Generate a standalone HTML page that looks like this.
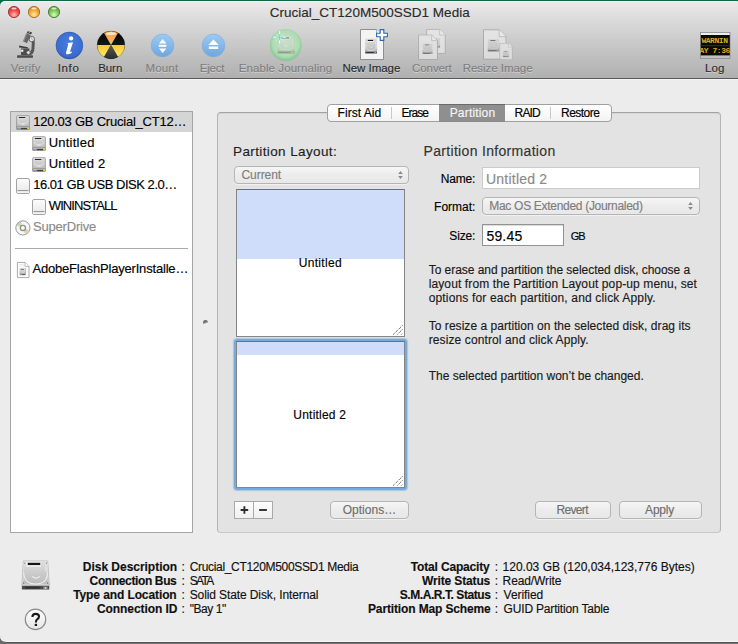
<!DOCTYPE html>
<html><head><meta charset="utf-8">
<style>
*{margin:0;padding:0;box-sizing:border-box}
html,body{width:738px;height:644px;overflow:hidden}
body{position:relative;background:#ececec;font-family:"Liberation Sans",sans-serif;color:#000}
.a{position:absolute}
.t{position:absolute;white-space:pre;line-height:1;-webkit-text-stroke:0.15px currentColor}
.s12{font-size:12px}
.s13{font-size:13px;letter-spacing:0.3px}
.s14{font-size:14px}
.lbl{position:absolute;top:62px;width:120px;font-size:12px;line-height:12px;white-space:pre;color:#2a2a2a;text-align:center}
.dis{color:#8c8c8c}
.btn{position:absolute;height:18px;background:linear-gradient(#f6f6f6,#ececec 50%,#e8e8e8);border:1px solid #b5b5b5;border-radius:4px;box-shadow:0 1px 0 rgba(255,255,255,.5)}
.bl{position:absolute;font-size:12px;font-weight:bold;line-height:14px;text-align:right;white-space:pre;color:#111}
.bv{position:absolute;font-size:12px;line-height:14px;white-space:pre;color:#111}
</style></head><body>
<svg width="0" height="0" style="position:absolute">
<defs>
 <linearGradient id="hdTop" x1="0" y1="0" x2="0" y2="1"><stop offset="0" stop-color="#dedede"/><stop offset="1" stop-color="#bababa"/></linearGradient>
 <linearGradient id="blueBtn" x1="0" y1="0" x2="0" y2="1"><stop offset="0" stop-color="#9dcaf2"/><stop offset="1" stop-color="#6ea6dd"/></linearGradient>
 <radialGradient id="infoG" cx="0.5" cy="0.4" r="0.6"><stop offset="0" stop-color="#4a7ddc"/><stop offset="0.85" stop-color="#3a6bd0"/><stop offset="1" stop-color="#2c58b8"/></radialGradient>
 <radialGradient id="jG" cx="0.5" cy="0.45" r="0.55"><stop offset="0" stop-color="#cde6cf"/><stop offset="0.75" stop-color="#aedbb3"/><stop offset="1" stop-color="#80c48c"/></radialGradient>
 <linearGradient id="burnY" x1="0" y1="0" x2="0" y2="1"><stop offset="0" stop-color="#f6c83c"/><stop offset="1" stop-color="#fde767"/></linearGradient>
 <linearGradient id="burnO" x1="0" y1="0" x2="0" y2="1"><stop offset="0" stop-color="#f59a3a"/><stop offset="1" stop-color="#f9c070"/></linearGradient>
 <symbol id="hd" viewBox="0 0 30 30">
  <path d="M3.3 0.9 H26.8 L28.3 24.2 H1.8Z" fill="url(#hdTop)" stroke="#9a9a9a" stroke-width="0.5"/>
  <path d="M3.9 1.6 H26.2 L27.5 23.6 H2.6Z" fill="none" stroke="#ececec" stroke-width="0.6"/>
  <rect x="5.9" y="1.8" width="14.5" height="4.8" fill="#f0f0f0"/>
  <rect x="7.5" y="2.7" width="12.1" height="2.2" fill="#151515"/>
  <path d="M3.6 12 Q4 23 15.2 23.2 Q26.4 23 26.6 12" stroke="#eeeeee" stroke-width="1" fill="none"/>
  <path d="M11.8 15.8 Q15.4 19.4 19 15.8" stroke="#eeeeee" stroke-width="1.1" fill="none"/>
  <rect x="24.6" y="2.5" width="1.2" height="9" fill="#e6e6e6"/>
  <circle cx="4.6" cy="3" r="0.6" fill="#777"/><circle cx="25.6" cy="3" r="0.6" fill="#777"/>
  <circle cx="3.5" cy="22.3" r="0.6" fill="#555"/><circle cx="26.8" cy="22.3" r="0.6" fill="#555"/>
  <rect x="1.8" y="24.2" width="26.5" height="4.4" rx="0.6" fill="#4c4c4c"/>
  <rect x="1.8" y="24.2" width="26.5" height="0.7" fill="#dadada"/>
  <rect x="5" y="26" width="14" height="1.6" fill="#2e2e2e"/>
  <rect x="22.3" y="25.5" width="4.6" height="2.6" fill="#6f7aa8"/>
  <circle cx="24.7" cy="27.1" r="0.95" fill="#f6f200"/>
 </symbol>
 <symbol id="hds" viewBox="0 0 14 15">
  <rect x="0.6" y="0.6" width="12.8" height="11.6" rx="1" fill="url(#hdTop)" stroke="#808080" stroke-width="0.6"/>
  <rect x="2.3" y="1.4" width="7.6" height="2.3" fill="#f6f6f6"/>
  <rect x="2.8" y="1.9" width="6.6" height="1.2" fill="#2a2a2a"/>
  <path d="M1.8 6.5 Q7 12.5 12.2 6.5" stroke="#f0f0f0" stroke-width="0.7" fill="none"/>
  <path d="M5.3 8 Q7 9.2 8.7 8" stroke="#f0f0f0" stroke-width="0.7" fill="none"/>
  <rect x="0.6" y="11.6" width="12.8" height="3" rx="0.6" fill="#9a9a9a" stroke="#6a6a6a" stroke-width="0.5"/>
  <rect x="1" y="11.8" width="12" height="0.6" fill="#ececec"/>
  <rect x="5.4" y="12.9" width="1.3" height="1.3" fill="#111"/>
  <rect x="7.4" y="12.9" width="1.3" height="1.3" fill="#111"/>
  <rect x="9.4" y="12.9" width="1.3" height="1.3" fill="#111"/>
  <rect x="11.5" y="12.7" width="1.4" height="1.4" fill="#f2ec00"/>
 </symbol>
 <symbol id="doc" viewBox="0 0 24 31">
  <path d="M0.5 0.5 H16.5 L23.5 7.5 V30.5 H0.5Z" fill="#f4f4f4" stroke="#8e8e8e" stroke-width="1"/>
  <path d="M16.5 0.5 V7.5 H23.5" fill="#fff" stroke="#9a9a9a" stroke-width="0.8"/>
 </symbol>
</defs>
</svg>

<!-- window chrome -->
<div class="a" style="left:0;top:0;width:738px;height:8px;background:#0b6a44"></div>
<div class="a" style="left:0;top:1px;width:738px;height:78px;background:linear-gradient(#eaeaea 0,#d9d9d9 20px,#afafaf 77px);border-radius:5px 1px 0 0;border-top:1px solid #fafafa"></div>
<div class="a" style="left:0;top:78px;width:738px;height:1px;background:#585858"></div>
<div class="a" style="left:0;top:79px;width:738px;height:1px;background:#f6f6f6"></div>

<!-- traffic lights -->
<svg class="a" style="left:6px;top:4px" width="56" height="16" viewBox="0 0 56 16">
 <defs>
  <radialGradient id="rR" cx="0.5" cy="0.75" r="0.6"><stop offset="0" stop-color="#ffc2bd"/><stop offset="0.6" stop-color="#f65452"/><stop offset="1" stop-color="#dc3a38"/></radialGradient>
  <radialGradient id="rO" cx="0.5" cy="0.75" r="0.6"><stop offset="0" stop-color="#ffeaa8"/><stop offset="0.6" stop-color="#f7b13c"/><stop offset="1" stop-color="#e0922a"/></radialGradient>
  <radialGradient id="rG" cx="0.5" cy="0.75" r="0.6"><stop offset="0" stop-color="#dcf7c0"/><stop offset="0.6" stop-color="#86cd60"/><stop offset="1" stop-color="#62ad46"/></radialGradient>
 </defs>
 <circle cx="8" cy="8" r="5.6" fill="url(#rR)" stroke="#9c2f2f" stroke-width="0.9"/>
 <ellipse cx="8" cy="4.6" rx="2.6" ry="1" fill="#fff" opacity=".75"/>
 <circle cx="28" cy="8" r="5.6" fill="url(#rO)" stroke="#9f6a1f" stroke-width="0.9"/>
 <ellipse cx="28" cy="4.6" rx="2.6" ry="1" fill="#fff" opacity=".75"/>
 <circle cx="48" cy="8" r="5.6" fill="url(#rG)" stroke="#3d7d2c" stroke-width="0.9"/>
 <ellipse cx="48" cy="4.6" rx="2.6" ry="1" fill="#fff" opacity=".75"/>
</svg>

<!-- toolbar icons -->
<!-- microscope -->
<svg class="a" style="left:12px;top:28px" width="30" height="34" viewBox="0 0 30 34">
 <path d="M5 28.2 Q5 27 6.5 27 H19.5 Q21 27 21 28.2 V29.2 Q21 29.8 20 29.8 H6 Q5 29.8 5 29.2Z" fill="#4a4a4a"/>
 <path d="M6 27.5 H20" stroke="#8a8a8a" stroke-width="0.5"/>
 <path d="M16.5 8.5 Q22.8 8.3 22.8 14.5 L22.4 21 Q22 26.5 18 27.2 L15.5 27.2 L16 24.5 Q19.2 24 19.5 20.5 L19.8 14.8 Q19.8 11.8 17.2 11.6Z" fill="#555"/>
 <path d="M14.3 5.3 L18.6 6.9 L15 15.3 L11.1 13.3Z" fill="#666"/>
 <path d="M14.3 5.3 L15.3 5.7 L12 13.7 L11.1 13.3Z" fill="#8e8e8e"/>
 <path d="M15.6 3.2 L19.9 4.3 L19.2 6.4 L14.9 5Z" fill="#3e3e3e"/>
 <circle cx="17.3" cy="4.6" r="0.6" fill="#bbb"/>
 <circle cx="19.8" cy="11.1" r="2.7" fill="#e6e6e6" stroke="#4a4a4a" stroke-width="0.8"/>
 <path d="M19.6 9.5 V11.1 L21 12.1" stroke="#777" stroke-width="0.5" fill="none"/>
 <path d="M7.1 17.4 L15.8 19.3 L15.8 20.5 L7.1 19.5Z" fill="#3e3e3e"/>
 <path d="M9 20.4 H17.4 V27 H9Z" fill="#4d4d4d"/>
 <circle cx="10.2" cy="22.7" r="1.3" fill="#e8e8e8"/>
 <circle cx="16.4" cy="24.6" r="1.8" fill="#e8e8e8" stroke="#555" stroke-width="0.6"/>
</svg>
<!-- info -->
<svg class="a" style="left:55px;top:31px" width="29" height="29" viewBox="0 0 29 29">
 <circle cx="14.4" cy="14.5" r="13.4" fill="url(#infoG)" stroke="#2a52a8" stroke-width="0.6"/>
 <circle cx="16.1" cy="7.4" r="2.1" fill="#fff"/>
 <path d="M12.9 11.9 L18 11.2 L15.1 20.2 Q14.9 21.3 16.9 20.5 L16.5 22.1 Q13.6 23.8 11.6 23.2 Q10.7 22.8 11.1 21.2 L13.2 13.6 Q13.1 12.9 12.6 12.9Z" fill="#fff"/>
</svg>
<!-- burn -->
<svg class="a" style="left:96px;top:30px" width="30" height="30" viewBox="0 0 30 30">
 <defs>
  <linearGradient id="bk" x1="0" y1="0" x2="0" y2="1"><stop offset="0" stop-color="#050505"/><stop offset="0.6" stop-color="#1a1a1a"/><stop offset="1" stop-color="#3c3c3c"/></linearGradient>
  <linearGradient id="bg2" x1="0" y1="0" x2="0" y2="1"><stop offset="0" stop-color="#5a5a5a"/><stop offset="1" stop-color="#2c2c2c"/></linearGradient>
 </defs>
 <circle cx="15" cy="15" r="13.9" fill="url(#bk)"/>
 <path d="M15 15 L21.95 2.96 A13.9 13.9 0 0 0 8.05 2.96Z" fill="url(#burnO)"/>
 <path d="M15 15 L28.9 15 A13.9 13.9 0 0 1 21.95 27.04Z" fill="url(#burnY)"/>
 <path d="M15 15 L1.1 15 A13.9 13.9 0 0 0 8.05 27.04Z" fill="url(#burnY)"/>
 <path d="M15 15 L21.95 27.04 A13.9 13.9 0 0 1 8.05 27.04Z" fill="url(#bg2)"/>
 <ellipse cx="15" cy="3.6" rx="5.2" ry="1.6" fill="#fff" opacity=".7"/>
 <circle cx="15" cy="15" r="13.9" fill="none" stroke="#000" stroke-opacity=".25" stroke-width="0.6"/>
</svg>
<!-- mount -->
<svg class="a" style="left:150px;top:33px" width="25" height="25" viewBox="0 0 25 25">
 <circle cx="12.5" cy="12.5" r="11.4" fill="url(#blueBtn)" stroke="#7aaee0" stroke-width="0.6"/>
 <path d="M12.7 6 L16.4 10.6 H9Z" fill="#fff"/>
 <rect x="8.8" y="11.8" width="7.6" height="2" fill="#fff"/>
 <path d="M9 15.6 H16.4 L12.7 20Z" fill="#fff"/>
</svg>
<!-- eject -->
<svg class="a" style="left:201px;top:33px" width="25" height="25" viewBox="0 0 25 25">
 <circle cx="12.5" cy="12.5" r="11.4" fill="url(#blueBtn)" stroke="#7aaee0" stroke-width="0.6"/>
 <path d="M12.4 6.6 L17.8 12.1 H7.4Z" fill="#fff"/>
 <rect x="7.8" y="13.5" width="9.4" height="2.5" fill="#fff"/>
</svg>
<!-- enable journaling -->
<svg class="a" style="left:269px;top:28px" width="34" height="34" viewBox="0 0 34 34">
 <circle cx="16.8" cy="17" r="16" fill="url(#jG)"/>
 <g opacity=".35"><use href="#hd" x="7.6" y="7.4" width="19" height="19.2"/></g>
 <path d="M6.5 5.2 L14.7 13.4 M14.7 5.2 L6.5 13.4" stroke="#e6f6f6" stroke-width="0.7" opacity=".7"/>
 <path d="M10.6 3 V15.5 M4.2 9.3 H17" stroke="#e4fbfb" stroke-width="1.1"/>
 <path d="M10.6 6.3 V12.3 M7.6 9.3 H13.6" stroke="#5cd6d6" stroke-width="0.9"/>
</svg>
<!-- new image -->
<svg class="a" style="left:360px;top:29px" width="30" height="32" viewBox="0 0 30 32">
 <use href="#doc" x="0" y="0" width="24" height="31"/>
 <svg x="4.4" y="9.4" width="13.4" height="15.8" viewBox="0 0 30 30" preserveAspectRatio="none"><use href="#hd" width="30" height="30"/></svg>
 <path d="M20.2 0.6 H23.8 V4.2 H27.4 V7.8 H23.8 V11.4 H20.2 V7.8 H16.6 V4.2 H20.2Z" fill="#fff" stroke="#2e67b1" stroke-width="1.1"/>
</svg>
<!-- convert -->
<svg class="a" style="left:417px;top:29px" width="30" height="32" viewBox="0 0 30 32" opacity=".55">
 <use href="#doc" x="9" y="0" width="20" height="25"/>
 <use href="#hd" x="13.5" y="9" width="10" height="10"/>
 <use href="#doc" x="0.5" y="5.5" width="21" height="25.5"/>
 <use href="#hd" x="5" y="14.5" width="11" height="11"/>
</svg>
<!-- resize image -->
<svg class="a" style="left:482px;top:29px" width="32" height="32" viewBox="0 0 32 32" opacity=".55">
 <use href="#doc" x="1" y="0" width="23.5" height="31"/>
 <use href="#hd" x="5" y="10" width="13" height="13"/>
 <use href="#doc" x="17" y="14" width="14" height="17"/>
 <use href="#hd" x="20.2" y="21.5" width="7.5" height="7"/>
</svg>
<!-- log -->
<svg class="a" style="left:700px;top:32px" width="31" height="27" viewBox="0 0 31 27">
 <defs><linearGradient id="lgS" x1="0" y1="0" x2="0" y2="1"><stop offset="0" stop-color="#f2f2f2"/><stop offset="1" stop-color="#bdbdbd"/></linearGradient></defs>
 <rect x="0.5" y="0.5" width="29.5" height="26" fill="url(#lgS)" stroke="#8a8a8a" stroke-width="0.8"/>
 <rect x="0.8" y="3" width="29" height="20.4" fill="#0a0a0a"/>
 <rect x="0.8" y="13" width="29" height="1.2" fill="#2a2a2a"/>
 <text x="1.4" y="11.2" font-family="Liberation Mono" font-weight="bold" font-size="8" fill="#dba82c" letter-spacing="-0.45">WARNIN</text>
 <text x="-0.6" y="21" font-family="Liberation Mono" font-weight="bold" font-size="8" fill="#dba82c" letter-spacing="-0.45">AY 7:36</text>
</svg>


<!-- sidebar -->
<div class="a" style="left:10px;top:111px;width:183px;height:422px;background:#fff;border:1px solid #a5a5a5"></div>
<div class="a" style="left:11px;top:112px;width:181px;height:20px;background:#d5d5d5"></div>
<svg class="a" style="left:16px;top:115px" width="14" height="15"><use href="#hds" width="14" height="15"/></svg>
<svg class="a" style="left:32px;top:136px" width="14" height="15"><use href="#hds" width="14" height="15"/></svg>
<svg class="a" style="left:32px;top:157px" width="14" height="15"><use href="#hds" width="14" height="15"/></svg>
<svg class="a" style="left:16px;top:178px" width="14" height="16" viewBox="0 0 14 16">
 <defs><linearGradient id="ug" x1="0" y1="0" x2="0" y2="1"><stop offset="0" stop-color="#fdfdfd"/><stop offset="1" stop-color="#e6e6e6"/></linearGradient></defs>
 <rect x="0.5" y="0.5" width="13" height="15" rx="1.6" fill="url(#ug)" stroke="#a2a2a2"/>
 <rect x="1.6" y="12.1" width="10.8" height="1.1" fill="#8e8e8e"/>
 <rect x="1" y="13.3" width="12" height="1.7" fill="#f2f2f2"/>
</svg>
<svg class="a" style="left:32px;top:199px" width="14" height="16" viewBox="0 0 14 16">
 <defs><linearGradient id="ug" x1="0" y1="0" x2="0" y2="1"><stop offset="0" stop-color="#fdfdfd"/><stop offset="1" stop-color="#e6e6e6"/></linearGradient></defs>
 <rect x="0.5" y="0.5" width="13" height="15" rx="1.6" fill="url(#ug)" stroke="#a2a2a2"/>
 <rect x="1.6" y="12.1" width="10.8" height="1.1" fill="#8e8e8e"/>
 <rect x="1" y="13.3" width="12" height="1.7" fill="#f2f2f2"/>
</svg>
<svg class="a" style="left:15px;top:220px" width="16" height="16" viewBox="0 0 16 16">
 <defs><linearGradient id="rb" x1="0" y1="0" x2="1" y2="1"><stop offset="0" stop-color="#6fb6ff"/><stop offset="0.35" stop-color="#8fe08f"/><stop offset="0.65" stop-color="#ffc08a"/><stop offset="1" stop-color="#f0a0c0"/></linearGradient></defs>
 <circle cx="7.9" cy="7.9" r="7.1" fill="#f6f6f6" stroke="#8c8c8c" stroke-width="0.9"/>
 <path d="M7.9 7.9 L1.6 5.6 A6.7 6.7 0 0 1 5.6 1.6Z" fill="url(#rb)" opacity=".8"/>
 <path d="M7.9 7.9 L14.2 10.2 A6.7 6.7 0 0 1 10.2 14.2Z" fill="url(#rb)" opacity=".8"/>
 <circle cx="7.9" cy="7.9" r="2.6" fill="#fafafa" stroke="#8f8f8f" stroke-width="1.3"/>
 <circle cx="7.9" cy="7.9" r="1.1" fill="#fff"/>
</svg>
<svg class="a" style="left:16px;top:261px" width="14" height="18" viewBox="0 0 14 18">
 <path d="M1.4 1.4 H9 L13 5.4 V16.6 H1.4Z" fill="#fcfcfc" stroke="#a0a0a0" stroke-width="0.9"/>
 <path d="M9 1.4 V5.4 H13" fill="#fff" stroke="#a8a8a8" stroke-width="0.8"/>
 <rect x="3" y="3.4" width="5" height="0.5" fill="#dcdcdc"/><rect x="3" y="4.8" width="5" height="0.5" fill="#dcdcdc"/>
 <use href="#hds" x="3.4" y="7" width="6.8" height="7.4"/>
</svg>
<div class="a" style="left:15px;top:248px;width:173px;height:1px;background:#ababab"></div>

<!-- splitter dot -->
<div class="a" style="left:203px;top:319.5px;width:5px;height:5px;border-radius:50%;background:linear-gradient(160deg,#555 0,#7a7a7a 45%,#f4f4f4 75%,#fff 100%)"></div>

<!-- panel -->
<div class="a" style="left:217px;top:112px;width:504px;height:421px;background:#e3e3e3;border:1px solid #b4b4b4;border-top-color:#a2a2a2;border-bottom-color:#c8c8c8;border-radius:4px;box-shadow:inset 0 1px 1px rgba(0,0,0,.06)"></div>
<div class="a" style="left:327px;top:104px;width:285px;height:18px;background:linear-gradient(#ffffff,#f3f3f3);border:1px solid #a0a0a0;border-radius:4px"></div>
<div class="a" style="left:439px;top:104px;width:66px;height:18px;background:#8f8f8f;border-top:1px solid #6a6a6a;border-bottom:1px solid #8a8a8a"></div>
<div class="a" style="left:391px;top:107px;width:1px;height:12px;background:#c8c8c8"></div>
<div class="a" style="left:550px;top:107px;width:1px;height:12px;background:#c8c8c8"></div>

<div class="btn" style="left:234px;top:166px;width:175px;height:18px"></div>
<svg class="a" style="left:396.5px;top:170px" width="7" height="11" viewBox="0 0 7 11"><path d="M3.5 1 L5.8 4 H1.2Z M1.2 6 H5.8 L3.5 9Z" fill="#8a8a8a"/></svg>

<div class="a" style="left:236px;top:189px;width:169px;height:148px;background:#fff;border:1px solid #858585;border-top-color:#687083"></div>
<div class="a" style="left:237px;top:190px;width:167px;height:69px;background:#cfddfb"></div>
<svg class="a" style="left:392px;top:324px" width="12" height="12" viewBox="0 0 12 12"><path d="M1.1 10.6 L10.6 1.3 M5.3 10.5 L10.6 5.2 M9.3 10.5 L10.6 9.2" stroke="#3a3a3a" stroke-width="0.9" stroke-dasharray="1.1 0.9"/></svg>

<div class="a" style="left:234px;top:339px;width:173px;height:151px;border:2px solid #74abdd;border-radius:3px;box-shadow:0 0 1px 1px rgba(120,175,225,.55)"></div>
<div class="a" style="left:236px;top:341px;width:169px;height:147px;background:#fff;border:1px solid #858585;border-top-color:#687083"></div>
<div class="a" style="left:237px;top:342px;width:167px;height:13px;background:#cfddfb"></div>
<svg class="a" style="left:392px;top:475px" width="12" height="12" viewBox="0 0 12 12"><path d="M1.1 10.6 L10.6 1.3 M5.3 10.5 L10.6 5.2 M9.3 10.5 L10.6 9.2" stroke="#3a3a3a" stroke-width="0.9" stroke-dasharray="1.1 0.9"/></svg>

<div class="a" style="left:234px;top:501px;width:39px;height:18px;background:linear-gradient(#fdfdfd,#f0f0f0);border:1px solid #a9a9a9"></div>
<div class="a" style="left:253px;top:502px;width:1px;height:16px;background:#a9a9a9"></div>
<svg class="a" style="left:234px;top:501px" width="39" height="18" viewBox="0 0 39 18"><path d="M6.6 9 H14.2 M10.4 5.2 V12.8" stroke="#2e2e2e" stroke-width="1.9"/><path d="M25.1 9 H32.9" stroke="#2e2e2e" stroke-width="1.9"/></svg>
<div class="btn" style="left:330px;top:501px;width:79px"></div>

<div class="a" style="left:482px;top:167px;width:218px;height:22px;background:#fff;border:1px solid #cbcbcb"></div>
<div class="btn" style="left:482px;top:197px;width:218px;height:18px"></div>
<svg class="a" style="left:686.8px;top:201px" width="7" height="11" viewBox="0 0 7 11"><path d="M3.5 1 L5.8 4 H1.2Z M1.2 6 H5.8 L3.5 9Z" fill="#8a8a8a"/></svg>
<div class="a" style="left:482px;top:224px;width:82px;height:22px;background:#fff;border:1px solid #929292;box-shadow:inset 0 1px 1px rgba(0,0,0,.15)"></div>


<div class="btn" style="left:535px;top:501px;width:76px"></div>
<div class="btn" style="left:619px;top:501px;width:83px"></div>

<!-- bottom info -->
<svg class="a" style="left:20px;top:560px" width="31" height="31"><use href="#hd" width="31" height="31"/></svg>
<svg class="a" style="left:24px;top:608px" width="23" height="23" viewBox="0 0 23 23">
 <defs><linearGradient id="hg" x1="0" y1="0" x2="0" y2="1"><stop offset="0" stop-color="#ffffff"/><stop offset="1" stop-color="#e6e6e6"/></linearGradient></defs>
 <circle cx="11.5" cy="11.4" r="10.2" fill="url(#hg)" stroke="#8c8c8c" stroke-width="1.2"/>
 <path d="M8.4 8.9 Q8.4 5.9 11.7 5.9 Q15 5.9 15 8.6 Q15 10.4 13.1 11.4 Q11.9 12.1 11.9 14.6" stroke="#1a1a1a" stroke-width="2.1" fill="none"/><rect x="10.7" y="15.8" width="2.4" height="2.2" fill="#1a1a1a"/>
</svg>



<div class="a" style="left:0;top:641px;width:738px;height:1px;background:#f7f7f7"></div>
<div class="a" style="left:0;top:642px;width:738px;height:1px;background:#505050"></div>
<div class="a" style="left:0;top:643px;width:738px;height:1px;background:#7a7a7a"></div>
<svg class="a" style="left:0;top:636px" width="6" height="8" viewBox="0 0 6 8"><path d="M0 0 Q0.5 5.5 5 5.5 L6 6 V8 H0Z" fill="#6a6a6a"/><path d="M0.3 1 Q0.8 5 5 5.2" stroke="#f7f7f7" stroke-width="0.6" fill="none"/></svg>
<div id="title" class="t" style="left:269.70px;top:5.5px;font-size:13.5px;color:#2b2b2b;letter-spacing:0.015px">Crucial_CT120M500SSD1 Media</div>
<div id="tb_verify" class="t" style="left:10.70px;top:63px;font-size:11.5px;color:#7f7f7f;letter-spacing:0.200px;text-shadow:0 1px 0 rgba(255,255,255,.4)">Verify</div>
<div id="tb_info" class="t" style="left:57.80px;top:63px;font-size:11.5px;color:#2a2a2a;letter-spacing:0.600px;text-shadow:0 1px 0 rgba(255,255,255,.4)">Info</div>
<div id="tb_burn" class="t" style="left:98.20px;top:63px;font-size:11.5px;color:#2a2a2a;letter-spacing:-0.067px;text-shadow:0 1px 0 rgba(255,255,255,.4)">Burn</div>
<div id="tb_mount" class="t" style="left:145.40px;top:63px;font-size:11.5px;color:#7f7f7f;letter-spacing:0.200px;text-shadow:0 1px 0 rgba(255,255,255,.4)">Mount</div>
<div id="tb_eject" class="t" style="left:199.70px;top:63px;font-size:11.5px;color:#7f7f7f;letter-spacing:-0.200px;text-shadow:0 1px 0 rgba(255,255,255,.4)">Eject</div>
<div id="tb_journ" class="t" style="left:238.70px;top:63px;font-size:11.5px;color:#7f7f7f;letter-spacing:0.088px;text-shadow:0 1px 0 rgba(255,255,255,.4)">Enable Journaling</div>
<div id="tb_newimg" class="t" style="left:342.40px;top:63px;font-size:11.5px;color:#2a2a2a;letter-spacing:-0.025px;text-shadow:0 1px 0 rgba(255,255,255,.4)">New Image</div>
<div id="tb_convert" class="t" style="left:412.10px;top:63px;font-size:11.5px;color:#7f7f7f;letter-spacing:-0.100px;text-shadow:0 1px 0 rgba(255,255,255,.4)">Convert</div>
<div id="tb_resize" class="t" style="left:462.70px;top:63px;font-size:11.5px;color:#7f7f7f;letter-spacing:-0.036px;text-shadow:0 1px 0 rgba(255,255,255,.4)">Resize Image</div>
<div id="tb_log" class="t" style="left:705.10px;top:63px;font-size:11.5px;color:#2a2a2a;letter-spacing:0.000px;text-shadow:0 1px 0 rgba(255,255,255,.4)">Log</div>
<div id="sb1" class="t" style="left:33.20px;top:115px;font-size:13px;color:#000;letter-spacing:-0.227px">120.03 GB Crucial_CT12…</div>
<div id="sb2" class="t" style="left:48.70px;top:136px;font-size:13px;color:#000;letter-spacing:0.229px">Untitled</div>
<div id="sb3" class="t" style="left:48.70px;top:157px;font-size:13px;color:#000;letter-spacing:0.178px">Untitled 2</div>
<div id="sb4" class="t" style="left:33.20px;top:178px;font-size:13px;color:#000;letter-spacing:-0.467px">16.01 GB USB DISK 2.0…</div>
<div id="sb5" class="t" style="left:48.80px;top:199px;font-size:13px;color:#000;letter-spacing:-0.933px">WININSTALL</div>
<div id="sb6" class="t" style="left:33.00px;top:220px;font-size:13px;color:#8a8a8a;letter-spacing:-0.200px">SuperDrive</div>
<div id="sb7" class="t" style="left:32.40px;top:262px;font-size:13px;color:#000;letter-spacing:-0.183px">AdobeFlashPlayerInstalle…</div>
<div id="tab1" class="t" style="left:337.60px;top:107px;font-size:12px;color:#000;letter-spacing:0.025px">First Aid</div>
<div id="tab2" class="t" style="left:401.60px;top:107px;font-size:12px;color:#000;letter-spacing:-1.000px">Erase</div>
<div id="tab3" class="t" style="left:449.70px;top:107px;font-size:12px;color:#f6f6f6;letter-spacing:0.175px">Partition</div>
<div id="tab4" class="t" style="left:514.60px;top:107px;font-size:12px;color:#000;letter-spacing:-0.867px">RAID</div>
<div id="tab5" class="t" style="left:561.00px;top:107px;font-size:12px;color:#000;letter-spacing:-0.533px">Restore</div>
<div id="playout" class="t" style="left:233.00px;top:145px;font-size:13.5px;color:#1e1e1e;letter-spacing:0.387px">Partition Layout:</div>
<div id="current" class="t" style="left:241.40px;top:169px;font-size:12px;color:#7e7e7e;letter-spacing:-0.033px">Current</div>
<div id="p1" class="t" style="left:298.70px;top:257px;font-size:12px;color:#000;letter-spacing:0.314px">Untitled</div>
<div id="p2" class="t" style="left:293.30px;top:409px;font-size:12px;color:#000;letter-spacing:0.222px">Untitled 2</div>
<div id="options" class="t" style="left:342.70px;top:504px;font-size:12px;color:#6e6e6e;letter-spacing:0.029px">Options…</div>
<div id="pinfo" class="t" style="left:423.50px;top:144px;font-size:14px;color:#333;letter-spacing:0.320px">Partition Information</div>
<div id="name" class="t" style="left:440.70px;top:173px;font-size:12px;color:#000;letter-spacing:-0.150px">Name:</div>
<div id="namev" class="t" style="left:486.00px;top:172px;font-size:14px;color:#8a8a8a;letter-spacing:0.222px">Untitled 2</div>
<div id="format" class="t" style="left:434.10px;top:201px;font-size:12px;color:#000;letter-spacing:0.000px">Format:</div>
<div id="formatv" class="t" style="left:489.30px;top:200px;font-size:12px;color:#7e7e7e;letter-spacing:-0.300px">Mac OS Extended (Journaled)</div>
<div id="size" class="t" style="left:449.30px;top:230px;font-size:12px;color:#000;letter-spacing:-0.150px">Size:</div>
<div id="sizev" class="t" style="left:486.40px;top:229px;font-size:14px;color:#000;letter-spacing:0.200px">59.45</div>
<div id="gb" class="t" style="left:570.80px;top:231px;font-size:11px;color:#000;letter-spacing:-1.200px">GB</div>
<div id="para1" class="t" style="left:428.70px;top:264px;font-size:12px;color:#1a1a1a;letter-spacing:-0.041px">To erase and partition the selected disk, choose a</div>
<div id="para2" class="t" style="left:428.70px;top:278px;font-size:12px;color:#1a1a1a;letter-spacing:0.112px">layout from the Partition Layout pop-up menu, set</div>
<div id="para3" class="t" style="left:428.70px;top:292px;font-size:12px;color:#1a1a1a;letter-spacing:0.163px">options for each partition, and click Apply.</div>
<div id="para4" class="t" style="left:428.70px;top:320px;font-size:12px;color:#1a1a1a;letter-spacing:0.047px">To resize a partition on the selected disk, drag its</div>
<div id="para5" class="t" style="left:428.70px;top:334px;font-size:12px;color:#1a1a1a;letter-spacing:0.113px">resize control and click Apply.</div>
<div id="para6" class="t" style="left:428.70px;top:370px;font-size:12px;color:#1a1a1a;letter-spacing:-0.010px">The selected partition won’t be changed.</div>
<div id="revert" class="t" style="left:556.40px;top:504px;font-size:12px;color:#6e6e6e;letter-spacing:-0.640px">Revert</div>
<div id="apply" class="t" style="left:645.10px;top:504px;font-size:12px;color:#6e6e6e;letter-spacing:-0.200px">Apply</div>
<div id="bl1" class="t" style="left:82.80px;top:561px;font-size:12px;color:#111;letter-spacing:-0.027px;font-weight:700">Disk Description</div>
<div id="bl2" class="t" style="left:89.60px;top:575px;font-size:12px;color:#111;letter-spacing:-0.369px;font-weight:700">Connection Bus</div>
<div id="bl3" class="t" style="left:73.20px;top:589px;font-size:12px;color:#111;letter-spacing:-0.100px;font-weight:700">Type and Location</div>
<div id="bl4" class="t" style="left:97.00px;top:603px;font-size:12px;color:#111;letter-spacing:-0.083px;font-weight:700">Connection ID</div>
<div id="bc1" class="t" style="left:181.50px;top:561px;font-size:12px;color:#111;letter-spacing:0.000px">:</div>
<div id="bc2" class="t" style="left:181.50px;top:575px;font-size:12px;color:#111;letter-spacing:0.000px">:</div>
<div id="bc3" class="t" style="left:181.50px;top:589px;font-size:12px;color:#111;letter-spacing:0.000px">:</div>
<div id="bc4" class="t" style="left:181.50px;top:603px;font-size:12px;color:#111;letter-spacing:0.000px">:</div>
<div id="bv1" class="t" style="left:189.70px;top:561px;font-size:12px;color:#111;letter-spacing:-0.323px">Crucial_CT120M500SSD1 Media</div>
<div id="bv2" class="t" style="left:189.70px;top:575px;font-size:12px;color:#111;letter-spacing:-1.667px">SATA</div>
<div id="bv3" class="t" style="left:189.70px;top:589px;font-size:12px;color:#111;letter-spacing:-0.104px">Solid State Disk, Internal</div>
<div id="bv4" class="t" style="left:189.70px;top:603px;font-size:12px;color:#111;letter-spacing:-0.433px">"Bay 1"</div>
<div id="br1" class="t" style="left:410.80px;top:561px;font-size:12px;color:#111;letter-spacing:-0.169px;font-weight:700">Total Capacity</div>
<div id="br2" class="t" style="left:422.10px;top:575px;font-size:12px;color:#111;letter-spacing:-0.145px;font-weight:700">Write Status</div>
<div id="br3" class="t" style="left:399.70px;top:589px;font-size:12px;color:#111;letter-spacing:-0.425px;font-weight:700">S.M.A.R.T. Status</div>
<div id="br4" class="t" style="left:368.00px;top:603px;font-size:12px;color:#111;letter-spacing:-0.137px;font-weight:700">Partition Map Scheme</div>
<div id="rc1" class="t" style="left:494.70px;top:561px;font-size:12px;color:#111;letter-spacing:0.000px">:</div>
<div id="rc2" class="t" style="left:494.70px;top:575px;font-size:12px;color:#111;letter-spacing:0.000px">:</div>
<div id="rc3" class="t" style="left:494.70px;top:589px;font-size:12px;color:#111;letter-spacing:0.000px">:</div>
<div id="rc4" class="t" style="left:494.70px;top:603px;font-size:12px;color:#111;letter-spacing:0.000px">:</div>
<div id="rv1" class="t" style="left:502.60px;top:561px;font-size:12px;color:#111;letter-spacing:-0.000px">120.03 GB (120,034,123,776 Bytes)</div>
<div id="rv2" class="t" style="left:502.60px;top:575px;font-size:12px;color:#111;letter-spacing:-0.111px">Read/Write</div>
<div id="rv3" class="t" style="left:503.60px;top:589px;font-size:12px;color:#111;letter-spacing:-0.057px">Verified</div>
<div id="rv4" class="t" style="left:503.60px;top:603px;font-size:12px;color:#111;letter-spacing:-0.179px">GUID Partition Table</div>
</body></html>
